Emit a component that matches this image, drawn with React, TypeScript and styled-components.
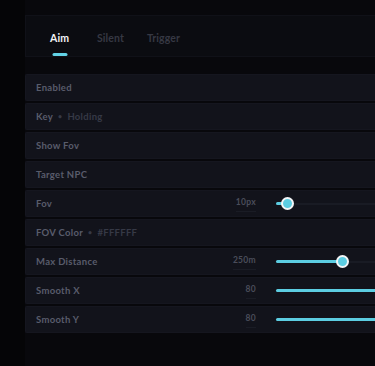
import React from "react";
import styled, { createGlobalStyle } from "styled-components";

const GlobalStyle = createGlobalStyle`
  html, body {
    margin: 0;
    padding: 0;
    background: #07070a;
    overflow: hidden;
  }
  body {
    font-family: Lato, "Open Sans", sans-serif;
  }
`;

type Setting = {
  label: string;
  detail?: string;
  value?: string;
  fill?: number;
  thumb?: boolean;
};

const settings: Setting[] = [
  { label: "Enabled" },
  { label: "Key", detail: "Holding" },
  { label: "Show Fov" },
  { label: "Target NPC" },
  { label: "Fov", value: "10px", fill: 11, thumb: true },
  { label: "FOV Color", detail: "#FFFFFF" },
  { label: "Max Distance", value: "250m", fill: 66, thumb: true },
  { label: "Smooth X", value: "80", fill: 240 },
  { label: "Smooth Y", value: "80", fill: 240 },
];

const tabs = [
  { name: "Aim", width: 47 },
  { name: "Silent", width: 50 },
  { name: "Trigger", width: 60 },
];

function App() {
  return (
    <>
      <GlobalStyle />
      <Shell>
        <Sidebar />
        <Main>
          <Header>
            {tabs.map((t, i) => (
              <TabCell key={t.name} $width={t.width}>
                <Tab $active={i === 0}>
                  {t.name}
                  {i === 0 && <Underline />}
                </Tab>
              </TabCell>
            ))}
          </Header>
          <List>
            {settings.map((s) => (
              <Row key={s.label}>
                <Label>
                  {s.label}
                  {s.detail && (
                    <Detail>
                      <Dot>•</Dot>
                      {s.detail}
                    </Detail>
                  )}
                </Label>
                {s.value && (
                  <>
                    <ValueBox>
                      <ValueText>{s.value}</ValueText>
                    </ValueBox>
                    <Slider>
                      <Track />
                      <Fill style={{ width: s.fill }} />
                      {s.thumb && <Thumb style={{ left: (s.fill ?? 0) - 6.5 }} />}
                    </Slider>
                  </>
                )}
              </Row>
            ))}
          </List>
        </Main>
      </Shell>
    </>
  );
}

export default App;

const Shell = styled.div`
  display: flex;
  height: 366px;
`;

const Sidebar = styled.div`
  width: 25px;
  flex: 0 0 25px;
  background: #050507;
`;

const Main = styled.div`
  flex: 1;
  padding-top: 15px;
  background: #08080c;
  min-width: 0;
`;

const Header = styled.div`
  display: flex;
  align-items: flex-start;
  width: 460px;
  height: 42px;
  padding: 16px 0 0 24px;
  box-sizing: border-box;
  background: #0b0c11;
  border: 1px solid #101118;
  border-right: none;
`;

const TabCell = styled.div<{ $width: number }>`
  display: flex;
  align-items: flex-start;
  flex: 0 0 ${(p) => p.$width}px;
`;

const Tab = styled.div<{ $active?: boolean }>`
  position: relative;
  height: 24px;
  font-size: 10.5px;
  line-height: 12px;
  font-weight: 700;
  letter-spacing: 0.1px;
  color: ${(p) => (p.$active ? "#f1f2f5" : "#363843")};
`;

const Underline = styled.div`
  position: absolute;
  left: 50%;
  bottom: 0;
  transform: translateX(-50%);
  width: 15px;
  height: 3px;
  border-radius: 2px;
  background: #62d2e6;
`;

const List = styled.div`
  display: flex;
  flex-direction: column;
  gap: 2px;
  width: 460px;
  margin-top: 17px;
`;

const Row = styled.div`
  display: flex;
  align-items: center;
  height: 27px;
  padding-left: 10px;
  box-sizing: border-box;
  background: #12131b;
  border: 1px solid #15161f;
  border-right: none;
  border-radius: 2px 0 0 2px;
`;

const Label = styled.div`
  flex: 0 0 190px;
  font-size: 9.5px;
  font-weight: 700;
  letter-spacing: 0.3px;
  color: #595c6b;
  white-space: nowrap;
`;

const Detail = styled.span`
  color: #363946;
`;

const Dot = styled.span`
  display: inline-block;
  margin: 0 5px;
  font-size: 7px;
  vertical-align: 1px;
`;

const ValueBox = styled.div`
  flex: 0 0 30px;
  display: flex;
  justify-content: flex-end;
  padding-top: 2px;
`;

const ValueText = styled.div`
  font-size: 8.5px;
  line-height: 9px;
  font-weight: 700;
  letter-spacing: 0.3px;
  color: #4a4d5a;
  padding-bottom: 4px;
  border-bottom: 1px solid #1a1c25;
`;

const Slider = styled.div`
  position: relative;
  display: flex;
  align-items: center;
  margin-left: 20px;
  width: 220px;
  height: 13px;
`;

const Track = styled.div`
  width: 100%;
  height: 2px;
  background: #191b24;
`;

const Fill = styled.div`
  position: absolute;
  left: 0;
  top: 5px;
  height: 3px;
  border-radius: 2px;
  background: #5ccde2;
`;

const Thumb = styled.div`
  position: absolute;
  top: 0;
  width: 13px;
  height: 13px;
  box-sizing: border-box;
  border-radius: 50%;
  background: #5ccde2;
  border: 2.5px solid #f3f5f7;
`;
